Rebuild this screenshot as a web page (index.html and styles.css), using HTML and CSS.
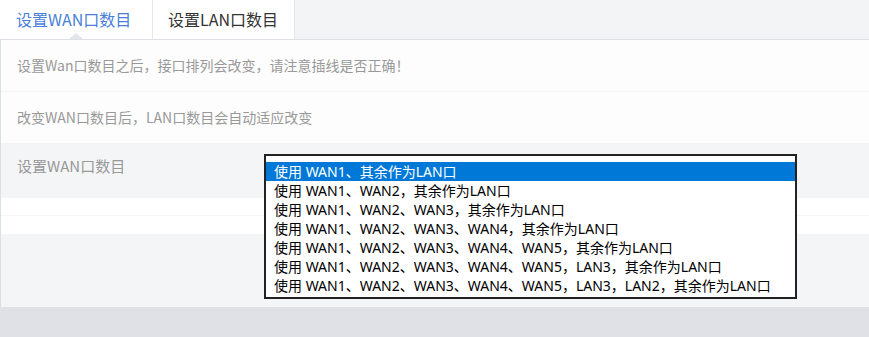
FILE: index.html
```html
<!DOCTYPE html>
<html>
<head>
    <meta charset="UTF-8">
    <title>端口设置</title>
    <link rel="stylesheet" href="styles.css">
</head>
<body>
    <div class="panel">
        <div class="tabs">
            <div class="tab active">设置WAN口数目</div>
            <div class="tab">设置LAN口数目</div>
        </div>

        <div class="note">设置Wan口数目之后，接口排列会改变，请注意插线是否正确！</div>
        <div class="note">改变WAN口数目后，LAN口数目会自动适应改变</div>

        <div class="field">
            <div class="field-label">设置WAN口数目</div>
            <div class="field-box">
                <div class="box-line"></div>
                <div class="box-line"></div>
            </div>
        </div>

        <div class="dropdown">
            <div class="option selected">使用 WAN1、其余作为LAN口</div>
            <div class="option">使用 WAN1、WAN2，其余作为LAN口</div>
            <div class="option">使用 WAN1、WAN2、WAN3，其余作为LAN口</div>
            <div class="option">使用 WAN1、WAN2、WAN3、WAN4，其余作为LAN口</div>
            <div class="option">使用 WAN1、WAN2、WAN3、WAN4、WAN5，其余作为LAN口</div>
            <div class="option">使用 WAN1、WAN2、WAN3、WAN4、WAN5，LAN3，其余作为LAN口</div>
            <div class="option">使用 WAN1、WAN2、WAN3、WAN4、WAN5，LAN3，LAN2，其余作为LAN口</div>
        </div>
    </div>
</body>
</html>
```

FILE: styles.css
```css
* {
    margin: 0;
    padding: 0;
    box-sizing: border-box;
}

body {
    font-family: "Noto Sans CJK SC", "Noto Sans", sans-serif;
    background: #dfe1e6;
    width: 869px;
    height: 337px;
    overflow: hidden;
}

.panel {
    position: relative;
    height: 307px;
    background: #f4f5f7;
    border-left: 1px solid #d8dfe8;
}

.tabs {
    display: flex;
    height: 40px;
    background: #f3f4f6;
    border-bottom: 1px solid #dde1e6;
}

.tab {
    position: relative;
    padding: 0 16px 0 15px;
    line-height: 39px;
    font-size: 16px;
    color: #333;
    background: #fff;
    border-right: 1px solid #e3e6ea;
}

.tab.active {
    width: 153px;
    margin-left: -1px;
    padding-left: 16px;
    color: #4a7fdb;
}

/* little caret under the active tab */
.tab.active::after {
    content: '';
    position: absolute;
    left: 69px;
    bottom: 0;
    border-left: 7px solid transparent;
    border-right: 7px solid transparent;
    border-bottom: 6px solid #e3e7ec;
}

.note {
    height: 52px;
    line-height: 51px;
    padding-left: 16px;
    font-size: 14px;
    color: #999;
    background: #fdfdfd;
    border-bottom: 1px solid #f4f4f4;
}

.field-label {
    height: 54px;
    line-height: 44px;
    padding-left: 16px;
    font-size: 15px;
    color: #999;
}

.field-box {
    display: flex;
    flex-direction: column;
}

.box-line {
    height: 18px;
    background: #fff;
    border-bottom: 1px solid #f6f6f6;
}

.box-line + .box-line {
    border-bottom: none;
}

.dropdown {
    position: absolute;
    left: 263px;
    top: 154px;
    width: 533px;
    height: 145px;
    padding-top: 6px;
    background: #fff;
    border: 2px solid #222;
}

.option {
    height: 19px;
    line-height: 19px;
    padding-left: 8px;
    font-family: "Noto Sans", "Noto Sans CJK SC", sans-serif;
    font-size: 14px;
    color: #000;
    white-space: nowrap;
}

.option.selected {
    background: #0078d7;
    color: #fff;
}
```
